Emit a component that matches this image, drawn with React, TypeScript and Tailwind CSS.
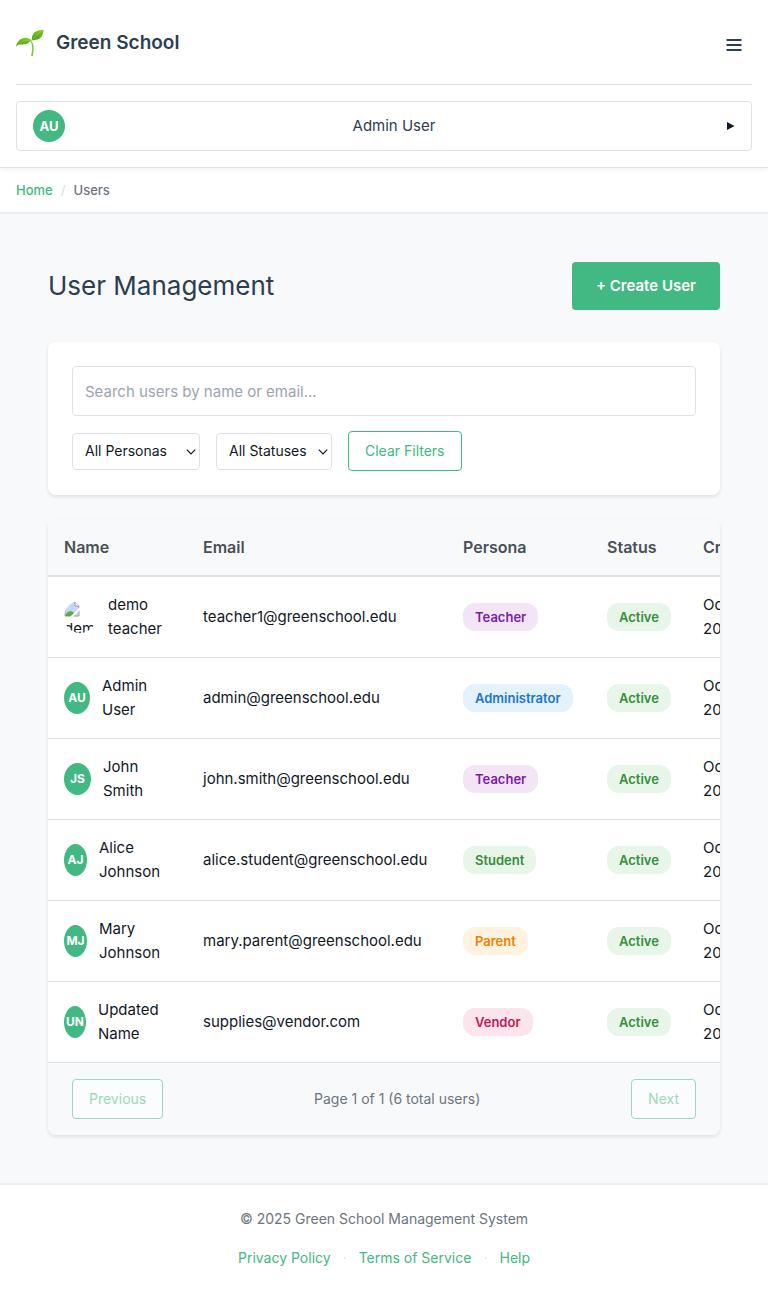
import React from 'react';

type User = {
  name: [string, string];
  initials: string | null;
  avatar: string;
  email: string;
  persona: string;
  tone: string;
};

const teacher = 'bg-[#f3e5f5] text-[#7b1fa2]';

const users: User[] = [
  { name: ['demo', 'teacher'], initials: null, avatar: 'w-8', email: 'teacher1@greenschool.edu', persona: 'Teacher', tone: teacher },
  { name: ['Admin', 'User'], initials: 'AU', avatar: 'w-[26px]', email: 'admin@greenschool.edu', persona: 'Administrator', tone: 'bg-[#e3f2fd] text-[#1976d2]' },
  { name: ['John', 'Smith'], initials: 'JS', avatar: 'w-[27px]', email: 'john.smith@greenschool.edu', persona: 'Teacher', tone: teacher },
  { name: ['Alice', 'Johnson'], initials: 'AJ', avatar: 'w-[23px]', email: 'alice.student@greenschool.edu', persona: 'Student', tone: 'bg-[#e8f5e9] text-[#388e3c]' },
  { name: ['Mary', 'Johnson'], initials: 'MJ', avatar: 'w-[23px]', email: 'mary.parent@greenschool.edu', persona: 'Parent', tone: 'bg-[#fff3e0] text-[#f57c00]' },
  { name: ['Updated', 'Name'], initials: 'UN', avatar: 'w-[22px]', email: 'supplies@vendor.com', persona: 'Vendor', tone: 'bg-[#fce4ec] text-[#c2185b]' },
];

function Seedling() {
  return (
    <svg viewBox="0 0 28 28" className="h-7 w-7" aria-hidden="true">
      <defs>
        <linearGradient id="leaf" x1="0" y1="0" x2="0" y2="1">
          <stop offset="0" stopColor="#7ccb22" />
          <stop offset="1" stopColor="#4f9c12" />
        </linearGradient>
      </defs>
      <path d="M15 11.500c2.300 2.500 2.800 5.500 2.600 8.500-.1 2.500-.3 4.500-.6 6.500-.5.8-1.700.7-1.900-.1.500-2.200.9-4.300 1-6.500.1-3-.2-5.700-2-8z" fill="#86c63a" />
      <path d="M.2 17.400C.5 13.500 3.500 9.300 8 8.900c3-.2 6 .8 7.800 2.500-2 .8-3.800 3-6.300 3.700C6 16 3 15 .2 17.400z" fill="url(#leaf)" />
      <path d="M15.900 11.400C15.300 7.500 17 3.500 20.500 2.200 23 1.200 25.500 1.600 27.500.6c.2 3.400-1.200 7.400-4.200 9.200-2.200 1.300-5 1-7.400 1.600z" fill="url(#leaf)" />
      <path d="M2 15.500c3-3.300 8-4.700 12.800-4.200M17 10.500c2.500-3.700 5.500-6.500 9-8.500" fill="none" stroke="#a3dc55" strokeWidth=".5" />
    </svg>
  );
}

function MissingPicture() {
  return (
    <svg viewBox="0 0 16 16" className="block h-4 w-4" aria-hidden="true">
      <path d="M1 1h10l4 4v10H1z" fill="#c6d6f6" stroke="#9aa0a6" />
      <path d="M1 15c2-5 6-6 9-3l1 3z" fill="#58ad3b" />
      <path d="M16 6L6 16h3l7-7z" fill="#fff" />
      <path d="M11 1v4h4" fill="#fff" stroke="#9aa0a6" />
    </svg>
  );
}

function Select({ label, options, width }: { label: string; options: string[]; width: string }) {
  return (
    <div className={`relative ${width}`}>
      <select
        aria-label={label}
        className="h-[37px] w-full appearance-none rounded border border-[#dee2e6] bg-white pl-3 text-[14px] text-[#111827]"
      >
        {options.map((o) => (
          <option key={o}>{o}</option>
        ))}
      </select>
      <svg viewBox="0 0 10 6" className="pointer-events-none absolute top-4 right-1 h-[6px] w-[10px]" fill="none" stroke="#111827" strokeWidth="1.200" aria-hidden="true">
        <path d="M.8.700L5 4.900 9.200.700" />
      </svg>
    </div>
  );
}

const outline = 'h-10 rounded border border-[#42b883] bg-white px-4 text-[14px] text-[#42b883] disabled:opacity-50';

export default function App() {
  return (
    <div className="min-h-screen bg-[#f8f9fb] font-['Inter','Noto_Sans',sans-serif] text-[15px] leading-6 text-[#111827]">
      <header className="relative border-b border-[#dee2e6] bg-white px-4 pb-4 shadow-[0_2px_4px_rgba(0,0,0,0.05)]">
        <div className="flex h-[85px] items-center justify-between border-b border-[#dee2e6] pt-[2px]">
          <a href="#home" className="flex items-center gap-3 text-[19px] font-semibold text-[#2c3e50]">
            <Seedling />
            Green School
          </a>
          <button type="button" aria-label="Menu" className="flex h-10 w-9 items-center justify-center pt-1">
            <svg viewBox="0 0 16 14" className="h-[14px] w-4" aria-hidden="true">
              <path d="M.5 2h15M.5 7h15M.5 12h15" stroke="#2c3e50" strokeWidth="2" />
            </svg>
          </button>
        </div>
        <button type="button" className="mt-4 flex h-[50px] w-full items-center justify-between rounded border border-[#dee2e6] px-4 text-[#2c3e50]">
          <span className="flex h-8 w-8 items-center justify-center rounded-full bg-[#42b883] text-[13px] font-bold text-white">AU</span>
          <span>Admin User</span>
          <svg viewBox="0 0 12 8" className="h-2 w-3" aria-hidden="true">
            <path d="M4 0l7.500 4L4 8z" fill="#111827" />
          </svg>
        </button>
      </header>

      <nav aria-label="Breadcrumb" className="flex h-[46px] items-center gap-2 border-b-2 border-[#eceef0] bg-white px-4 text-[13px] font-medium">
        <a href="#home" className="text-[#42b883]">Home</a>
        <span className="text-[#dee2e6]">/</span>
        <span className="text-[#6c757d]">Users</span>
      </nav>

      <main className="p-12">
        <div className="flex items-center justify-between">
          <h1 className="text-[26px] leading-10 text-[#2c3e50]">User Management</h1>
          <button type="button" className="h-12 rounded bg-[#42b883] px-6 font-semibold text-white">+ Create User</button>
        </div>

        <section className="mt-8 rounded-lg bg-white p-6 shadow-[0_2px_4px_rgba(0,0,0,0.1)]">
          <input
            type="search"
            aria-label="Search users"
            placeholder="Search users by name or email..."
            className="h-[50px] w-full rounded border border-[#dee2e6] px-3 placeholder:text-[#9ca3af]"
          />
          <div className="mt-[15px] flex items-center gap-4">
            <Select label="Persona" width="w-32" options={['All Personas', 'Teacher', 'Administrator', 'Student', 'Parent', 'Vendor']} />
            <Select label="Status" width="w-[116px]" options={['All Statuses', 'Active', 'Inactive']} />
            <button type="button" className={outline}>Clear Filters</button>
          </div>
        </section>

        <section className="mt-6 overflow-hidden rounded-lg bg-white shadow-[0_2px_4px_rgba(0,0,0,0.1)]">
          <div className="overflow-hidden">
            <table className="w-[751px] table-fixed border-collapse text-left">
              <colgroup>
                <col className="w-[139px]" />
                <col className="w-[260px]" />
                <col className="w-36" />
                <col className="w-24" />
                <col className="w-28" />
              </colgroup>
              <thead className="bg-[#f8f9fb] text-[16px] text-[#495057]">
                <tr className="h-[57px] border-b-2 border-[#dee2e6]">
                  {['Name', 'Email', 'Persona', 'Status', 'Created'].map((h) => (
                    <th key={h} scope="col" className="px-4 font-semibold">{h}</th>
                  ))}
                </tr>
              </thead>
              <tbody>
                {users.map((u) => (
                  <tr key={u.email} className="h-[81px] border-b border-[#dee2e6]">
                    <td className="px-4">
                      <div className="flex items-center gap-3">
                        {u.initials ? (
                          <span className={`${u.avatar} flex h-8 shrink-0 items-center justify-center rounded-[50%] bg-[#42b883] text-[12px] font-bold text-white`}>{u.initials}</span>
                        ) : (
                          <span className={`${u.avatar} block h-8 shrink-0 overflow-hidden rounded-[50%]`}>
                            <MissingPicture />
                            <span className="block">demo</span>
                          </span>
                        )}
                        <span>{u.name[0]}<br />{u.name[1]}</span>
                      </div>
                    </td>
                    <td className="px-4">{u.email}</td>
                    <td className="px-4">
                      <span className={`${u.tone} inline-block rounded-xl px-3 py-1 text-[13px] leading-5 font-semibold`}>{u.persona}</span>
                    </td>
                    <td className="px-4">
                      <span className="inline-block rounded-xl bg-[#e8f5e9] px-3 py-1 text-[13px] leading-5 font-semibold text-[#388e3c]">Active</span>
                    </td>
                    <td className="px-4">Oct<br />2025</td>
                  </tr>
                ))}
              </tbody>
            </table>
          </div>
          <div className="flex h-[72px] items-center justify-between bg-[#f8f9fb] px-6">
            <button type="button" disabled className={outline}>Previous</button>
            <span className="text-[14px] text-[#6c757d]">Page 1 of 1 (6 total users)</span>
            <button type="button" disabled className={outline}>Next</button>
          </div>
        </section>
      </main>

      <footer className="border-t-2 border-[#eceef0] bg-white pt-[22px] pb-6 text-center text-[14px] leading-[23px] text-[#6c757d]">
        <p>© 2025 Green School Management System</p>
        <div className="mt-4 flex justify-center gap-3 text-[#42b883]">
          <a href="#privacy">Privacy Policy</a>
          <span className="text-[#dee2e6]">·</span>
          <a href="#terms">Terms of Service</a>
          <span className="text-[#dee2e6]">·</span>
          <a href="#help">Help</a>
        </div>
      </footer>
    </div>
  );
}
